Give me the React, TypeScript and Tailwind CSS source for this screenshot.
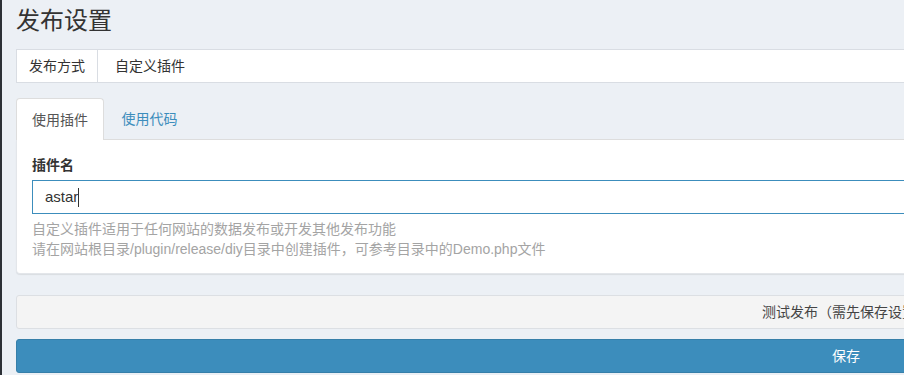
import React from "react";

export default function App() {
  return (
    <div
      className="w-[904px] h-[375px] overflow-hidden bg-[#ecf0f5] flex text-[#333]"
      style={{ fontFamily: '"Liberation Sans", "Noto Sans CJK SC", sans-serif' }}
    >
      <div className="w-[2px] shrink-0 bg-[#2c3036]" />
      <div className="pl-[14px] w-[1674px] shrink-0">
        <h1 className="h-[49px] pt-[9px] text-[24px] leading-[24px] font-normal">发布设置</h1>

        <div className="flex h-[34px] border border-[#d9dde3] bg-white text-[14px] leading-[20px]">
          <div className="w-[81px] shrink-0 border-r border-[#d9dde3] flex items-center justify-center">
            发布方式
          </div>
          <div className="flex-1 flex items-center pl-[17px]">自定义插件</div>
        </div>

        <div className="mt-[15px]">
          <div className="flex h-[42px] text-[14px] leading-[20px]">
            <div className="w-[88px] shrink-0 bg-white border border-[#ddd] border-b-0 rounded-t-[4px] flex items-center justify-center text-[#555]">
              使用插件
            </div>
            <div className="w-[91px] shrink-0 flex items-center justify-center text-[#3c8dbc] border-b border-[#ddd]">
              使用代码
            </div>
            <div className="flex-1 border-b border-[#ddd]" />
          </div>
          <div className="bg-white border border-t-0 border-[#e3e6ea] rounded-b-[4px] shadow-[0_1px_1px_rgba(0,0,0,0.08)] px-[15px] pt-[15px] pb-[14px] text-[14px] leading-[20px]">
            <div className="font-bold mb-[5px]">插件名</div>
            <div className="h-[34px] border border-[#3c8dbc] flex items-center pl-[12px] text-[15px]">
              <span>astar</span>
              <span className="inline-block w-[1px] h-[19px] bg-[#333]" />
            </div>
            <div className="mt-[5px] text-[#a4a4a4]">
              <div>自定义插件适用于任何网站的数据发布或开发其他发布功能</div>
              <div>请在网站根目录/plugin/release/diy目录中创建插件，可参考目录中的Demo.php文件</div>
            </div>
          </div>
        </div>

        <div className="mt-[21px] h-[34px] border border-[#dcdfe3] bg-[#f4f4f4] rounded-[3px] flex items-center justify-center text-[14px] text-[#444]">
          测试发布（需先保存设置）
        </div>

        <div className="mt-[10px] h-[34px] border border-[#367fa9] bg-[#3c8dbc] rounded-[3px] flex items-center justify-center text-[14px] text-white">
          保存
        </div>
      </div>
    </div>
  );
}
